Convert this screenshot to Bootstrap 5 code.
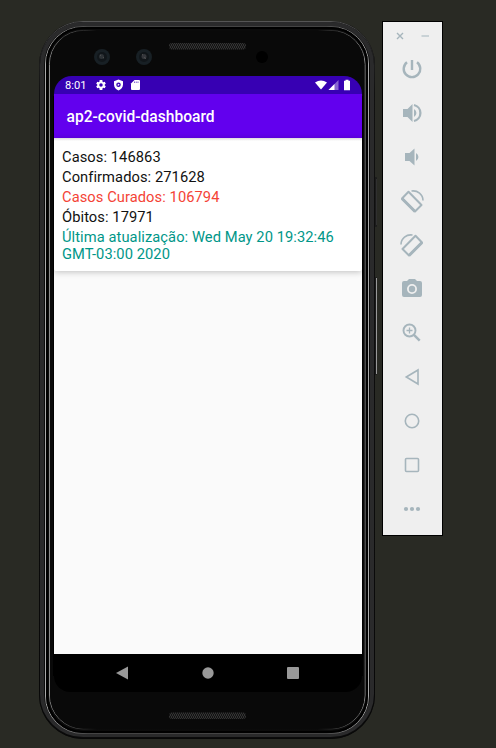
<!DOCTYPE html>
<html lang="pt-BR">
<head>
<meta charset="utf-8">
<meta name="viewport" content="width=device-width, initial-scale=1">
<title>ap2-covid-dashboard</title>
<link href="https://cdn.jsdelivr.net/npm/bootstrap@5.3.0/dist/css/bootstrap.min.css" rel="stylesheet">
<style>
html,body{height:748px;overflow:hidden}
body{background:#292a24;font-family:Roboto,sans-serif;padding:21px 0 0 39px;gap:4px}
.phone{width:339px;height:718px;padding:0 16px 0 15px}
.bezel{left:0;top:0;width:339px;height:718px}
.topgap{height:55px}
.display{height:616px;border-radius:18px 18px 16px 16px;background:linear-gradient(#3700b3 0 30px,#fafafa 30px 578px,#000 578px)}
.statusbar{height:18px;color:#fff;font-size:11.2px;line-height:18px;padding:0 11px}
.statusbar span{padding-top:1px}
.appbar{height:44px;background:#6200ee;color:#fff;font-size:15.6px;font-weight:500;line-height:47px;padding-left:12.5px}
.stats{height:133px;border-radius:0 0 2px 2px;background:#fff;box-shadow:0 1px 6px rgba(0,0,0,.24);padding:11px 8px 0;font-size:14.7px;line-height:17.5px;color:#111;letter-spacing:.07px}
.stats p{margin:0 0 2.5px;white-space:nowrap}
.stats .updated{color:#009688;line-height:17.2px}
.cured{color:#f44336}
.topshade{height:3px;background:linear-gradient(#ddd,#fff);margin:0 0 -3px;z-index:1}
.navkeys{height:38px;padding:0 63px 0 62px}
.tools{width:61px;height:515px;border:1px solid #000;background:#efefef;color:#a6b5bc;padding-top:3px}
.winbtns{height:22px;padding:0 12px}
.tools .key{height:44px;display:flex;align-items:center;justify-content:center;padding-right:1px}
svg{display:block}
</style>
</head>
<body class="d-flex align-items-start">
<main class="phone position-relative flex-shrink-0">
<svg class="bezel position-absolute" viewBox="0 0 339 718" fill="none">
<defs>
<linearGradient id="edge" x1="0" y1="0" x2="0" y2="1"><stop offset="0" stop-color="#555"/><stop offset=".04" stop-color="#222"/><stop offset=".1" stop-color="#111"/><stop offset="1" stop-color="#080808"/></linearGradient>
<linearGradient id="rim" x1="0" x2="1"><stop offset="0" stop-color="#aaa"/><stop offset=".05" stop-color="#888"/><stop offset=".13" stop-color="#444"/><stop offset=".87" stop-color="#444"/><stop offset=".95" stop-color="#888"/><stop offset="1" stop-color="#aaa"/></linearGradient>
<linearGradient id="glass" x1="0" x2="1"><stop offset="0" stop-color="#8a8a8a"/><stop offset=".05" stop-color="#555"/><stop offset=".15" stop-color="#0a0a0a"/><stop offset=".85" stop-color="#0a0a0a"/><stop offset=".95" stop-color="#555"/><stop offset="1" stop-color="#8a8a8a"/></linearGradient>
<pattern id="mesh" width="4" height="4" patternUnits="userSpaceOnUse"><rect width="4" height="4" fill="#141414"/><path d="M0 0l2 2-2 2M2 0l2 2-2 2" stroke="#3b3b3b" stroke-width=".8"/></pattern>
</defs>
<rect x="335" y="156" width="3" height="50" rx="1" fill="#1b1b1b"/><path d="M337.500 158v46" stroke="#303030"/>
<rect x="335" y="256" width="3" height="98" rx="1" fill="#1b1b1b"/><path d="M337.500 257v96" stroke="#999"/>
<rect width="336" height="718" rx="44" fill="#0b0b0b"/>
<rect x=".5" y=".5" width="335" height="717" rx="43.5" stroke="url(#edge)"/>
<rect x="3" y="3" width="330" height="711" rx="41" stroke="#2a2a2b" stroke-width="4"/>
<rect x="6.500" y="5.500" width="323" height="707" rx="37.500" stroke="url(#rim)"/>
<rect x="8" y="7" width="320" height="704" rx="36" stroke="#000" stroke-width="2"/>
<rect x="10.500" y="9.500" width="315.500" height="698.500" rx="34" stroke="url(#glass)"/>
<rect x="11" y="10" width="314.500" height="697.500" rx="33" fill="#090909"/>
<path d="M14.500 75v580M323.500 75v580" stroke="#000"/>
<rect x="130" y="22" width="77" height="6.500" rx="3" fill="url(#mesh)"/>
<rect x="130" y="691.500" width="77" height="6.500" rx="3" fill="url(#mesh)"/>
<g><circle cx="63" cy="36" r="8" fill="#182025"/><circle cx="63" cy="36" r="5" fill="#11161a"/><circle cx="62.500" cy="35.500" r="2.500" fill="#2d3236"/><path d="M61 34l1 .5M64 37l1-.5" stroke="#555"/></g>
<g><circle cx="105" cy="36" r="8" fill="#182025"/><circle cx="105" cy="36" r="5" fill="#11161a"/><circle cx="105" cy="35.500" r="2.500" fill="#34363b"/><path d="M103 34l1-.5M105 36.500l2 1" stroke="#555"/></g>
<circle cx="223" cy="36" r="6" fill="#000"/>
</svg>
<div class="topgap"></div>
<section class="display position-relative overflow-hidden d-flex flex-column">
<div class="statusbar d-flex align-items-center">
<span>8:01</span>
<svg class="ms-2" width="12" height="12" viewBox="0 0 24 24" fill="#fff"><path d="M19.4 13a7.800 7.800 0 0 0 0-2l2.200-1.700-2.200-3.700-2.600 1a8 8 0 0 0-1.700-1L14.700 2H9.300l-.4 3.600a8 8 0 0 0-1.700 1l-2.600-1-2.200 3.700L4.600 11a7.800 7.800 0 0 0 0 2l-2.200 1.700 2.200 3.700 2.600-1a8 8 0 0 0 1.700 1l.4 3.600h5.400l.4-3.600a8 8 0 0 0 1.700-1l2.600 1 2.200-3.700zM12 15.500a3.500 3.500 0 1 1 0-7 3.500 3.500 0 0 1 0 7z"/></svg>
<svg class="ms-1" width="15" height="12" viewBox="-3 0 30 24" fill="#fff"><path fill-rule="evenodd" d="M12 1l9 3.500V11c0 6-4 10-9 12-5-2-9-6-9-12V4.500zM12 7a4.500 4.500 0 1 0 0 9 4.500 4.500 0 0 0 0-9zm-1.500 2l4 2.500-4 2.500z"/></svg>
<svg class="ms-1" width="12" height="12" viewBox="1 0 24 24" fill="#fff"><path d="M10 2h9q2 0 2 2v16q0 2-2 2H5q-2 0-2-2V9z"/><path d="M10 5v3M13.500 5v3M17 5v3" stroke="#3700b3" stroke-width="1.200"/></svg>
<svg class="ms-auto" width="38" height="12" viewBox="0 0 38 12" fill="#fff"><path d="M2 3.500Q8 -.5 14 3.500L8 10.500z"/><path d="M25.500 1v10h-10z" opacity=".4"/><path d="M21.500 5v6h-6z"/><path d="M32.500 .7h3v1H37v9.500h-6V1.700h1.500z"/></svg>
</div>
<header class="appbar">ap2-covid-dashboard</header>
<div class="topshade"></div>
<article class="stats">
<p>Casos: 146863</p>
<p>Confirmados: 271628</p>
<p class="cured">Casos Curados: 106794</p>
<p>Óbitos: 17971</p>
<p class="updated">Última atualização: Wed May 20 19:32:46<br>GMT-03:00 2020</p>
</article>
<nav class="navkeys mt-auto d-flex align-items-center justify-content-between">
<svg width="12" height="14" viewBox="0 0 12 14"><path d="M0 7L12 .5v13z" fill="#999"/></svg>
<svg width="12" height="12" viewBox="0 0 12 12"><circle cx="6" cy="6" r="5.700" fill="#999"/></svg>
<svg width="12" height="12" viewBox="0 0 12 12"><rect width="12" height="12" rx="1" fill="#999"/></svg>
</nav>
</section>
</main>
<aside class="tools flex-shrink-0">
<div class="winbtns d-flex align-items-center justify-content-between">
<svg width="10" height="10" viewBox="0 0 10 10" stroke="currentColor" stroke-width="1.400"><path d="M2 2l6 6M8 2L2 8"/></svg>
<svg width="10" height="10" viewBox="0 0 10 10"><path d="M1.500 5H9" stroke="#c4cfd3" stroke-width="1.800"/></svg>
</div>
<div class="key"><svg width="24" height="24" viewBox="0 0 24 24" fill="none" stroke="currentColor" stroke-width="2.400"><path d="M12 3v10M7 5.200a8.300 8.300 0 1 0 10 0"/></svg></div>
<div class="key"><svg width="24" height="24" viewBox="0 0 24 24" fill="currentColor"><path d="M3 8h4.500L12.500 3v18l-5-5H3zM14 8a4.500 4.500 0 0 1 0 8z"/><path d="M14 4a8.200 8.200 0 0 1 0 16" fill="none" stroke="currentColor" stroke-width="2.300"/></svg></div>
<div class="key"><svg width="24" height="24" viewBox="0 0 24 24" fill="currentColor"><path d="M5 8h4.500l5-4.500v17l-5-4.500H5zM16 8a4.500 4.500 0 0 1 0 8z"/></svg></div>
<div class="key"><svg width="26" height="26" viewBox="0 -1 26 26" fill="none" stroke="currentColor"><path d="M9.500 2.800L22.500 16l-6.500 6.500L3 9.500z" stroke-width="2" stroke-linejoin="round"/><path d="M3 9.500l13 13" stroke-width="3"/><path d="M12.500 2c6-1 11.500 3.500 11.500 9.500" stroke-width="1.600"/></svg></div>
<div class="key"><svg width="26" height="26" viewBox="0 -1 26 26" fill="none" stroke="currentColor"><path d="M16.500 2.800L3.500 16l6.500 6.500L23 9.500z" stroke-width="2" stroke-linejoin="round"/><path d="M23 9.500l-13 13" stroke-width="3"/><path d="M13.500 2c-6-1-11.500 3.500-11.500 9.500" stroke-width="1.600"/></svg></div>
<div class="key"><svg width="24" height="24" viewBox="0 1 24 24" fill="currentColor"><path fill-rule="evenodd" d="M9 3h6l2 2h3q2 0 2 2v12q0 2-2 2H4q-2 0-2-2V7q0-2 2-2h3zM12 8a5 5 0 1 0 0 10 5 5 0 0 0 0-10z"/><circle cx="12" cy="13" r="3.200"/></svg></div>
<div class="key"><svg width="24" height="24" viewBox="0 0 24 24" fill="none" stroke="currentColor"><circle cx="9.500" cy="9.500" r="6" stroke-width="1.900"/><path d="M9.500 6.500v6M6.500 9.500h6" stroke-width="1.300"/><path d="M13.700 13.700l6 6" stroke-width="2.500"/></svg></div>
<div class="key"><svg width="24" height="24" viewBox="0 0 24 24" fill="none" stroke="currentColor" stroke-width="1.600"><path d="M6.300 12L18 5v14z"/></svg></div>
<div class="key"><svg width="24" height="24" viewBox="0 0 24 24" fill="none" stroke="currentColor" stroke-width="1.600"><circle cx="12" cy="12" r="6.700"/></svg></div>
<div class="key"><svg width="24" height="24" viewBox="0 0 24 24" fill="none" stroke="currentColor" stroke-width="1.600"><rect x="5.500" y="5.500" width="13" height="13" rx="1"/></svg></div>
<div class="key"><svg width="24" height="24" viewBox="0 0 24 24" fill="currentColor"><circle cx="6" cy="12" r="2.100"/><circle cx="12" cy="12" r="2.100"/><circle cx="18" cy="12" r="2.100"/></svg></div>
</aside>
<script src="https://cdn.jsdelivr.net/npm/bootstrap@5.3.0/dist/js/bootstrap.bundle.min.js"></script>
</body>
</html>
